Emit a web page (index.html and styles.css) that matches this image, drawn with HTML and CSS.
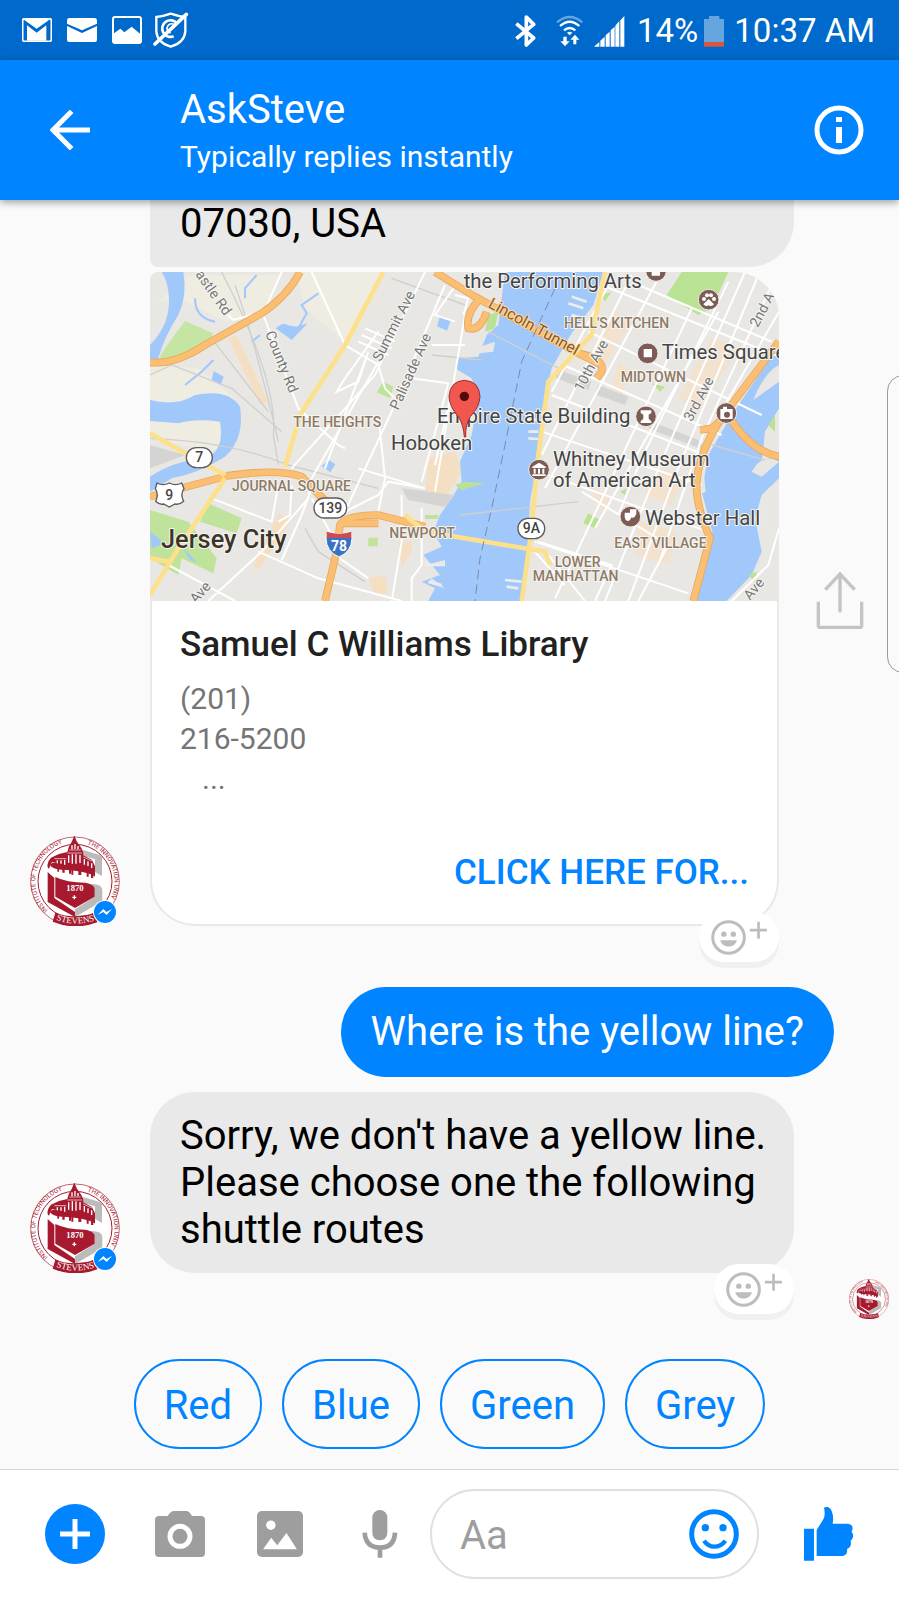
FILE: index.html
```html
<!DOCTYPE html>
<html lang="en">
<head>
<meta charset="utf-8">
<meta name="viewport" content="width=device-width, initial-scale=1">
<title>AskSteve</title>
<link rel="stylesheet" href="styles.css">
</head>
<body>
<svg class="defs" aria-hidden="true">
  <symbol id="seal" viewBox="90 50 270 270">
    <circle cx="225" cy="186" r="133" fill="#fff" stroke="#a6192e" stroke-width="2"/>
    <circle cx="225" cy="186" r="111" fill="none" stroke="#a6192e" stroke-width="3"/>
    <path id="arc-left" d="M144 273A119 119 0 0 1 206 68" fill="none"/>
    <path id="arc-right" d="M262 75A118 118 0 0 1 334 233" fill="none"/>
    <text class="seal-ring"><textPath href="#arc-left">INSTITUTE OF TECHNOLOGY</textPath></text>
    <text class="seal-ring"><textPath href="#arc-right">THE INNOVATION UNIVER</textPath></text>
    <path d="M250 92L306 109V170L285 158V120L250 110Z" fill="#bbb"/>
    <path d="M143 158L163 176V236L225 278V293L143 248Z" fill="#a6192e"/>
    <path d="M225 270L284 232V210L270 194Q307 193 307 212V246L225 293Z" fill="#bbb"/>
    <path d="M166 173Q200 190 255 190Q279 193 284 207V232L225 266L166 232Z" fill="#a6192e"/>
    <path d="M223 48L230 66L244 86L250 98V108L276 122L285 141V178L262 174L225 164L190 158Q160 160 144 146Q138 130 153 115L177 104L202 98L206 84L216 66Z" fill="#a6192e"/>
    <path d="M180 128Q154 126 151 138Q157 150 184 151Q260 154 286 172Q307 183 307 203Q290 184 246 180Q175 178 144 154L156 128Z" fill="#fff"/>
    <path d="M172 142h5v15h-5zM187 140h7v20h-7zM207 146h6v17h-6zM214 150h6v16h-6zM235 150h9v17h-9zM260 154h6v18h-6zM273 160h7v16h-7z" fill="#a6192e"/>
    <path d="M163 118h36M202 101h44M208 92h34M250 113l26 12" stroke="#fff" stroke-width="2"/>
    <path d="M172 123v9M183 123v10M194 121v15M206 108v22M217 105v28M228 105v28M240 107v24M253 119v17M264 126v14M275 132v14M216 78v12M225 74v15M234 80v10" stroke="#fff" stroke-width="4"/>
    <path d="M217 234h12M223 228v12" stroke="#fff" stroke-width="4"/>
    <text class="seal-year" x="225" y="214">1870</text>
    <path d="M166 280Q220 301 286 281L292 309Q225 334 158 307Z" fill="#a6192e"/>
    <path id="arc-bottom" d="M168 301Q225 324 290 302" fill="none"/>
    <text class="seal-name"><textPath href="#arc-bottom">STEVENS</textPath></text>
  </symbol>
  <symbol id="messenger" viewBox="0 0 72 72">
    <circle cx="36" cy="36" r="36" fill="#fff"/><circle cx="36" cy="36" r="33" fill="#0084ff"/>
    <path d="M14 45L31 27L40 36L57 27L41 45L31 36Z" fill="#fff"/>
  </symbol>
  <symbol id="react" viewBox="0 0 166 104">
    <g fill="none" stroke="#bdbdbd" stroke-width="9"><circle cx="52" cy="52" r="47"/><path d="M115 30h51M141 5v51" stroke-width="8"/></g>
    <g fill="#bdbdbd"><circle cx="38" cy="42" r="8"/><circle cx="66" cy="42" r="8"/><path d="M27 60H77Q71 79 52 79Q33 79 27 60Z"/></g>
  </symbol>
</svg>

<div class="app">
  <div class="status">
    <div class="status-left">
      <svg width="30" height="24" viewBox="66 54 90 72"><rect x="68" y="56" width="86" height="68" rx="6" fill="none" stroke="#fff" stroke-width="5"/><path d="M81 122V76L110 98L139 76V122ZM76 62L110 86L144 62L150 57H70Z" fill="#fff"/></svg>
      <svg width="30" height="24" viewBox="0 0 90 72"><path d="M6 0H84Q90 0 90 8V17L45 37L0 17V8Q0 0 6 0ZM0 24L45 45L90 24V65Q90 72 84 72H6Q0 72 0 65Z" fill="#fff"/></svg>
      <svg width="30" height="28" viewBox="0 0 90 84"><rect x="3" y="3" width="84" height="78" rx="6" fill="none" stroke="#fff" stroke-width="6"/><path d="M6 52L25 38L37 49L59 32L84 53V80H6Z" fill="#fff"/></svg>
      <svg class="shield" width="36" height="36" viewBox="462 36 108 108"><g fill="none" stroke="#fff"><path d="M472 51Q493 49 515 41Q538 49 559 51V94Q557 127 515 140Q474 127 472 94Z" stroke-width="7"/><path d="M534 70A25 25 0 1 0 524 109" stroke-width="8"/><path d="M530 78A14 14 0 1 0 515 99" stroke-width="5"/><path d="M468 132L562 43" stroke-width="11" stroke-linecap="round"/></g></svg>
    </div>
    <div class="status-right">
      <svg class="bluetooth" width="21" height="32" viewBox="198 41 63 96"><path d="M202 67L254 110L232 131V47L254 69L202 112" fill="none" stroke="#fff" stroke-width="11" stroke-linejoin="round"/></svg>
      <svg width="28" height="32" viewBox="321 42 84 96"><g fill="none" stroke="#fff" stroke-width="7"><path d="M324 64Q362 32 400 64" stroke="#66a6e0"/><path d="M333 75Q362 49 391 75M345 88Q362 74 379 88"/></g><path d="M354 95Q362 90 370 95L362 103ZM343 107h10v14h9l-14 15l-14-15h9zM373 130v-14h-9l14-15l13 15h-9v14z" fill="#fff"/></svg>
      <svg width="31" height="31" viewBox="432 43 93 93"><path d="M432 135L448 121V135ZM451 135V117L464 105V135ZM467 135V101L479 90V135ZM482 135V86L494 75V135ZM496 135V72L508 58V135ZM511 135V56L523 43V135Z" fill="#fff"/></svg>
      <span class="percent">14%</span>
      <svg class="battery" width="20" height="31" viewBox="0 0 60 93"><path d="M0 9H15V0H46V9H60V78H0Z" fill="#66a6e0"/><path d="M0 78H60V92H0Z" fill="#d9583c"/></svg>
      <span>10:37 AM</span>
    </div>
  </div>

  <header class="header">
    <button class="icon-btn back" aria-label="Back"><svg width="40" height="40" viewBox="150 330 120 120"><path d="M270 390H160M215 334L159 390L215 446" fill="none" stroke="#fff" stroke-width="15"/></svg></button>
    <div class="who"><h1>AskSteve</h1><p>Typically replies instantly</p></div>
    <button class="icon-btn" aria-label="Info"><svg width="50" height="50" viewBox="0 0 50 50"><circle cx="25" cy="25" r="22" fill="none" stroke="#fff" stroke-width="5"/><path d="M22 12h6v5h-6zM22 22h6v16h-6z" fill="#fff"/></svg></button>
  </header>

  <main class="chat">
    <div class="row"><div class="bubble bubble-cut">07030, USA</div></div>

    <div class="row row-card">
      <div class="avatar"><svg width="90" height="90"><use href="#seal"/></svg><svg class="badge" width="24" height="24"><use href="#messenger"/></svg></div>
      <article class="card">
        <svg class="map" viewBox="15 21 1887 987" role="img" aria-label="Map of Hoboken">
          <rect x="15" y="21" width="1887" height="987" fill="#e8e7e4"/>
          <path d="M15 300L160 310L270 400L280 500L200 560L15 520ZM450 21H720L600 230L480 130ZM40 110L130 30H410L350 150L240 170L100 100Z" fill="#efece1"/>
          <path d="M250 220L275 210L370 410L345 420ZM850 580L930 560L950 620L900 700L840 680ZM760 830L800 830L800 860L770 905ZM400 745L440 765L340 915L325 900ZM670 940L720 930L730 985L690 990Z" fill="#f5dfc2"/>
          <path d="M120 168L205 205L190 240L90 285L38 285L70 235Z" fill="#c5e6a3"/>
          <path d="M15 735L130 770L215 880L205 925L110 880L100 930L15 880ZM190 715L290 760L275 805L165 770ZM715 350L745 365L735 400L695 382ZM670 818h28v26h-28zM840 750h40v12h-40z" fill="#bfe39b"/>
          <g fill="#a0c8fb">
            <path d="M50 21H115Q128 90 100 150Q60 210 38 285H15V240Q75 180 72 100Q70 50 50 21Z"/>
            <path d="M15 405Q95 425 150 390Q250 370 285 425Q300 520 240 575Q160 625 80 640L15 680V635Q80 590 180 578Q240 560 225 470Q150 460 100 475L15 468Z"/>
            <path d="M885 152L918 164L906 197L876 184ZM392 190Q420 165 440 190L488 175L440 225ZM530 603L552 585L571 598L556 622ZM206 318L236 335L228 357L200 345ZM15 800L60 835L20 850ZM115 850L155 890L135 885Z"/>
            <path d="M1080 21H1375L1345 120L1280 205L1220 310L1190 440L1180 570L1155 710L1145 900L1130 1008H850L870 970L830 950L885 930L835 870L890 845L865 800L885 750L920 700L950 650L945 590L980 510L1000 400L980 340L930 310L940 280L1000 275L1025 210L1060 180Z"/>
            <path d="M1902 240L1760 450L1690 570L1670 680L1702 800L1645 1008H1745L1820 930L1850 860L1830 760L1850 690L1902 640V560L1850 590L1860 500L1902 430Z"/>
          </g>
          <g fill="#e8e7e4">
            <path d="M1825 405Q1860 320 1902 300V350ZM1820 620Q1855 560 1902 590L1850 635ZM840 900L900 885V900ZM860 940L900 970L850 955ZM1675 610L1682 680L1660 690ZM990 250L1050 230L1045 260L1005 265Z"/>
          </g>
          <path d="M300 100V70L335 30M150 100Q150 160 210 170M410 180L460 190L485 145L470 120L520 85M120 360L170 320L205 285M320 230L345 210" fill="none" stroke="#a0c8fb" stroke-width="6"/>
          <path d="M1610 21H1750L1700 130L1660 150L1565 90ZM1330 745L1365 765L1350 790L1315 775ZM1520 355L1560 365L1545 380ZM1425 680L1445 670L1440 690ZM1030 150L1060 140L1050 190L1020 200ZM1370 90L1400 80L1380 110ZM1540 850L1570 845L1560 870ZM1870 480L1890 450L1890 500ZM1810 930L1835 920L1830 950ZM1020 655L960 650L930 660L950 675Z" fill="#b9e294"/>
          <path d="M1400 140L1465 160L1380 300L1340 270ZM1700 220L1780 250L1660 440L1600 400ZM1540 610L1620 630L1580 720L1500 690ZM1480 770L1600 800L1570 900L1470 870ZM1420 290L1460 320L1430 390L1400 370ZM1330 660L1400 700L1370 740Z" fill="#f3e2cd"/>
          <path d="M1240 315L1340 350L1330 375L1232 340ZM1360 360L1450 395L1440 420L1350 388ZM1520 470L1660 525L1690 560L1510 490ZM770 670L930 690L900 725L790 705ZM15 540L120 570L15 610Z" fill="#d4d4d3"/>
          <g class="rail">
            <path d="M230 21Q400 350 385 510L400 600M270 60Q330 230 400 530M15 330L80 300L260 370L410 500M15 520Q260 530 430 600L700 670M480 790L520 860L660 950M740 40L960 120M1030 200L1260 320M860 270L1010 285M945 750L1300 710M1700 540L1860 585M370 440L200 220"/>
          </g>
          <g class="streets">
            <path d="M355 150L460 430L580 540L600 550M500 21L600 240L700 300L720 370L750 400M250 150L265 165L355 140M355 145L410 21M840 21L690 330L440 610M900 60L740 440L600 740M960 150L870 680M700 200L600 340L575 380L640 350L670 260L540 610M700 450L720 640L700 740M200 700L380 770L400 660M440 660L435 750L400 770M190 1008L350 860L490 700L500 640L700 290M70 900L270 1008M340 860L520 940L770 1008M410 885L470 750L500 670M500 700L560 810M570 870L670 940M640 610L840 670L730 650L700 690L600 740M830 730V900L800 940V1008M770 690V830L740 1008M860 240H960M800 340L910 355L830 650M925 70L870 150L930 170M870 600L920 380M930 90L970 100L955 150"/>
            <path d="M1370 60L1902 275M1330 200L1850 450M1255 300L1730 510M1220 390L1680 570M1190 500L1670 660M1180 620L1690 800M1170 830L1630 985M1310 680L1570 840L1480 1008M1390 60L1220 380M1460 30L1190 570M1540 40L1200 670M1640 130L1230 1000M1720 140L1350 790M1750 50L1490 580L1420 750M1800 21L1540 610L1380 1008M1840 30L1600 610L1450 1008M1880 60L1670 520L1540 900M1902 140L1740 420M1480 60L1880 230M1180 830L1400 900L1350 1008M1210 870L1320 1008M1160 850L1260 960"/>
            <path d="M1902 790L1870 900L1760 1008M660 190L750 230M650 210L740 250M640 230L730 270"/>
          </g>
          <g class="road road-edge"><path d="M15 292Q90 300 180 240L350 145Q430 90 465 21M15 695L250 632Q400 610 470 635Q510 680 550 715M870 21L990 95L1300 265L1370 300M540 1008L575 860L585 780Q600 750 700 750L840 785M590 775L700 775M1005 100Q960 150 970 190Q1005 200 1025 140M1300 265Q1380 280 1370 320L1355 340M1902 230L1740 445Q1650 570 1655 680Q1660 740 1695 820L1645 1008M1745 450L1700 490L1665 495M1755 460Q1820 560 1902 575"/></g>
          <g class="road"><path d="M15 292Q90 300 180 240L350 145Q430 90 465 21M15 695L250 632Q400 610 470 635Q510 680 550 715M870 21L990 95L1300 265L1370 300M540 1008L575 860L585 780Q600 750 700 750L840 785M590 775L700 775M1005 100Q960 150 970 190Q1005 200 1025 140M1300 265Q1380 280 1370 320L1355 340M1902 230L1740 445Q1650 570 1655 680Q1660 740 1695 820L1645 1008M1745 450L1700 490L1665 495M1755 460Q1820 560 1902 575"/></g>
          <path class="yellow" d="M715 21L600 240L465 450L420 605M15 505L130 570L240 630M240 640L100 850L15 990M15 880L70 890M1380 21L1340 210L1210 350L1180 570L1155 830L1130 1008M780 750L840 800L1200 860L1215 900"/>
          <path d="M1230 70L1130 290L1080 540L1040 730L1005 880L990 1008" fill="none" stroke="#7d8ba3" stroke-width="3" stroke-dasharray="28 16"/>
          <path d="M1280 95L1325 110M1270 115L1315 130M1280 150L1315 160M1140 460L1180 465M1150 500L1180 500M1150 520L1180 522M1150 615L1170 615M1080 945L1130 950M1085 965L1120 970M840 900H900M850 950L890 960" stroke="#ececea" stroke-width="8"/>

          <g class="street-name">
            <text transform="translate(150 28) rotate(55)">astle Rd</text>
            <text transform="translate(360 205) rotate(68)">County Rd</text>
            <text transform="translate(707 292) rotate(-63)">Summit Ave</text>
            <text transform="translate(760 437) rotate(-66)">Palisade Ave</text>
            <text transform="translate(153 1018) rotate(-48)">Ave</text>
            <text transform="translate(1312 382) rotate(-62)">10th Ave</text>
            <text transform="translate(1640 472) rotate(-62)">3rd Ave</text>
            <text transform="translate(1838 190) rotate(-62)">2nd A</text>
            <text transform="translate(1815 1008) rotate(-50)">Ave</text>
            <text class="tunnel" transform="translate(1027 125) rotate(29)">Lincoln Tunnel</text>
          </g>
          <g class="area">
            <text x="445" y="487">THE HEIGHTS</text><text x="261" y="677">JOURNAL SQUARE</text><text x="733" y="818">NEWPORT</text>
            <text x="1257" y="190">HELL'S KITCHEN</text><text x="1427" y="350">MIDTOWN</text><text x="1408" y="850">EAST VILLAGE</text>
            <text x="1229" y="907">LOWER</text><text x="1163" y="949">MANHATTAN</text>
          </g>
          <g class="place">
            <text x="956" y="69">the Performing Arts</text><text x="1550" y="283">Times Square</text>
            <text x="876" y="475">Empire State Building</text><text x="738" y="555">Hoboken</text>
            <text x="1224" y="604">Whitney Museum</text><text x="1224" y="665">of American Art</text><text x="1500" y="779">Webster Hall</text>
          </g>
          <text class="city" x="48" y="850">Jersey City</text>
          <g fill="#7c5c55" stroke="#f1ece8" stroke-width="3"><circle cx="1508" cy="265" r="31"/><circle cx="1503" cy="454" r="31"/><circle cx="1182" cy="614" r="31"/><circle cx="1456" cy="755" r="31"/><circle cx="1744" cy="444" r="31"/><circle cx="1691" cy="104" r="31"/><circle cx="1533" cy="18" r="31"/></g>
          <g fill="#fff"><path d="M1496 252h25v25h-25zM1487 436h32v8l-8 5v12l8 8v5h-32v-5l8-8v-12l-8-5zM1162 605l20-12l20 12v4h-40zM1166 611h6v15h-6zM1179 611h6v15h-6zM1192 611h6v15h-6zM1162 628h40v5h-40zM1726 432h8v-7h12v7h17v30h-37zM1439 743h20v13q-3 12-11 12q-8-2-9-11zM1455 733h19v14q-4 10-10 11h-5v-15h-4zM1520 20h25v12h-25z"/><circle cx="1677" cy="102" r="6"/><circle cx="1686" cy="91" r="6"/><circle cx="1698" cy="91" r="6"/><circle cx="1707" cy="102" r="6"/><path d="M1691 102L1707 118Q1700 126 1691 121Q1682 126 1675 118Z"/></g>
          <circle cx="1746" cy="449" r="9" fill="#7c5c55"/>
          <g fill="#fff" stroke="#5c5c5c" stroke-width="4"><rect x="124" y="548" width="78" height="60" rx="30"/><rect x="507" y="699" width="98" height="60" rx="30"/><rect x="1119" y="760" width="80" height="61" rx="30"/><path d="M36 654Q54 664 73 654Q92 664 110 654L117 671Q105 688 116 709Q104 720 90 717L73 726L56 717Q43 720 32 709Q42 688 31 671Z"/></g>
          <g class="shield-no"><text x="163" y="591">7</text><text x="556" y="744">139</text><text x="73" y="706">9</text><text x="1159" y="805">9A</text></g>
          <path d="M543 820Q550 805 545 800Q583 812 619 800Q615 810 621 820Q620 860 582 876Q544 860 543 820Z" fill="#3b73c4" stroke="#fff" stroke-width="3"/><path d="M545 800Q583 812 619 800L619 818H545Z" fill="#d34a4a"/>
          <text class="interstate" x="582" y="857">78</text>
          <path d="M958 516Q956 480 940 455Q913 425 912 394Q916 348 958 346Q1002 348 1005 394Q1004 425 976 455Q960 480 962 516Z" fill="#f2574f" stroke="#9c2f2c" stroke-width="3"/><circle cx="958" cy="394" r="14" fill="#4d0d0b"/>
        </svg>
        <div class="card-body">
          <h2>Samuel C Williams Library</h2>
          <p>(201)<br>216-5200</p>
          <p class="more">...</p>
          <a class="cta" href="#details">CLICK HERE FOR...</a>
        </div>
        <button class="react" aria-label="Add reaction"><svg width="56" height="35"><use href="#react"/></svg></button>
      </article>
      <button class="icon-btn share" aria-label="Share"><svg width="48" height="60" viewBox="468 92 144 180"><path d="M475 184V256Q475 261 481 261H599Q605 261 605 256V184M540 216V100M496 148L540 101L584 148" fill="none" stroke="#c4c4c4" stroke-width="10"/></svg></button>
    </div>

    <div class="bubble bubble-me">Where is the yellow line?</div>

    <div class="row">
      <div class="avatar"><svg width="90" height="90"><use href="#seal"/></svg><svg class="badge" width="24" height="24"><use href="#messenger"/></svg></div>
      <div class="bubble">Sorry, we don't have a yellow line. Please choose one the following shuttle routes
        <button class="react react-low" aria-label="Add reaction"><svg width="56" height="35"><use href="#react"/></svg></button>
      </div>
    </div>
    <div class="seen"><svg width="40" height="40"><use href="#seal"/></svg></div>

    <div class="replies"><button>Red</button><button>Blue</button><button>Green</button><button>Grey</button></div>
    <div class="edge-handle"></div>
  </main>

  <footer class="composer">
    <button class="icon-btn" aria-label="More"><svg width="60" height="60" viewBox="0 0 60 60"><circle cx="30" cy="30" r="30" fill="#0084ff"/><path d="M15 30h30M30 15v30" stroke="#fff" stroke-width="5"/></svg></button>
    <button class="icon-btn camera" aria-label="Camera"><svg width="50" height="46" viewBox="465 210 150 138"><path d="M477 225H503Q512 210 522 210H559Q568 210 576 225H603Q615 225 615 237V336Q615 348 603 348H477Q465 348 465 336V237Q465 225 477 225Z" fill="#9e9e9e"/><circle cx="540" cy="286" r="30" fill="#9e9e9e" stroke="#fff" stroke-width="15"/></svg></button>
    <button class="icon-btn photo" aria-label="Photo"><svg width="46" height="46" viewBox="771 214 136 136"><rect x="771" y="214" width="136" height="136" rx="14" fill="#9e9e9e"/><circle cx="812" cy="256" r="14" fill="#fff"/><path d="M789 327L813 293L831 315L858 279L889 327Z" fill="#fff"/></svg></button>
    <button class="icon-btn mic" aria-label="Voice"><svg width="36" height="48" viewBox="1085 214 108 144"><rect x="1116" y="214" width="45" height="91" rx="22" fill="#9e9e9e"/><path d="M1093 282Q1096 327 1139 327Q1182 327 1184 282M1139 327V357" fill="none" stroke="#9e9e9e" stroke-width="14"/></svg></button>
    <div class="field">
      <input type="text" placeholder="Aa" aria-label="Message">
      <button class="icon-btn" aria-label="Emoji"><svg width="50" height="50" viewBox="717 207 150 150"><circle cx="792" cy="282" r="67" fill="none" stroke="#0084ff" stroke-width="15"/><circle cx="766" cy="263" r="11" fill="#0084ff"/><circle cx="819" cy="263" r="11" fill="#0084ff"/><path d="M762 302Q775 320 793 320Q813 320 826 302" fill="none" stroke="#0084ff" stroke-width="13"/></svg></button>
    </div>
    <button class="icon-btn like" aria-label="Like"><svg width="50" height="54" viewBox="1062 195 150 162"><path d="M1062 260h30v96h-30zM1100 264L1120 232Q1127 220 1122 197Q1137 190 1145 207Q1152 224 1148 245H1194Q1207 247 1208 259Q1207 265 1205 269Q1211 277 1209 286Q1207 293 1202 296Q1204 308 1201 313Q1197 319 1191 321Q1194 338 1178 342H1100Z" fill="#0084ff"/></svg></button>
  </footer>
</div>
</body>
</html>
```
FILE: styles.css
```css
* { box-sizing: border-box; }
body { margin: 0; background: #fafafa; color: #000; font-family: Roboto, "Liberation Sans", sans-serif; }
h1, h2, p { margin: 0; font-weight: 400; }
button { font: inherit; border: 0; padding: 0; background: none; color: inherit; cursor: pointer; }
svg { display: block; flex: none; }
.defs { position: absolute; width: 0; height: 0; }
.app { display: flex; flex-direction: column; min-height: 100vh; }
.icon-btn { display: flex; flex: none; }

.status { display: flex; justify-content: space-between; align-items: center; height: 60px; padding: 0 24px 0 22px; background: #006acc; color: #fff; font-size: 33px; line-height: 40px; }
.status-left, .status-right { display: flex; align-items: center; }
.status-left { gap: 15px; }
.status-right { padding-top: 2px; }
.shield { margin-left: -4px; }
.status-right { gap: 10px; }
.bluetooth { margin-right: 10px; }
.percent { margin-left: 2px; }
.battery { margin-left: -4px; }

.header { position: relative; z-index: 1; display: flex; align-items: center; height: 140px; padding: 0 35px 0 50px; background: #0084ff; color: #fff; box-shadow: 0 2px 8px rgba(0, 0, 0, .4); }
.who { flex: 1; margin-left: 90px; padding-top: 4px; }
.who h1 { font-size: 40px; line-height: 50px; }
.who p { font-size: 30px; line-height: 44px; }

.chat { position: relative; display: flex; flex: 1; flex-direction: column; overflow: hidden; padding-bottom: 20px; }
.row { display: grid; grid-template-columns: minmax(0, 120px) minmax(0, 644px); column-gap: 30px; }
.row > .bubble { grid-column: 2; }
.row-card { grid-template-columns: minmax(0, 120px) minmax(0, 629px) 48px; margin-top: 5px; }
.avatar { position: relative; align-self: end; justify-self: end; width: 90px; }
.badge { position: absolute; right: 3px; bottom: 2px; }
.bubble { position: relative; padding: 20px 24px 20px 30px; border-radius: 45px; background: #e9e9e9; font-size: 40px; line-height: 47px; }
.bubble-cut { padding-top: 0; border-radius: 0 0 45px 8px; }
.bubble-me { align-self: flex-end; min-height: 90px; margin: 61px 65px 15px; padding: 20px 30px; background: #0084ff; color: #fff; line-height: 50px; }

.card { position: relative; }
.map { width: 100%; height: auto; border-radius: 8px 45px 0 0; }
.card-body { display: flex; flex-direction: column; padding: 20px 28px 30px; border: 2px solid #e9e9e9; border-top: 0; border-radius: 0 0 45px 45px; background: #fff; }
.card h2 { font-size: 35px; font-weight: 500; line-height: 48px; color: #212121; }
.card p { margin-top: 10px; font-size: 30px; line-height: 40px; color: #757575; }
.card .more { margin: 0; padding-left: 22px; }
.cta { align-self: flex-end; margin-top: 53px; font-size: 35px; font-weight: 500; line-height: 42px; color: #0084ff; text-decoration: none; }
.share { align-self: center; justify-self: center; margin: 4px 0 0 14px; }
.react { position: absolute; right: 0; bottom: -36px; display: flex; align-items: center; justify-content: center; width: 80px; height: 50px; border-radius: 25px; background: #fff; box-shadow: 0 6px 0 #f0f0f0; }
.react-low { bottom: -41px; }
.seen { align-self: flex-end; margin: 6px 10px 0 0; }

.replies { display: flex; justify-content: center; gap: 20px; margin-top: auto; padding-top: 20px; }
.replies button { height: 90px; padding: 2px 28px 0; border: 2px solid #0084ff; border-radius: 45px; color: #0084ff; font-size: 40px; }
.edge-handle { position: absolute; top: 175px; right: -20px; width: 32px; height: 298px; border: 1px solid #999; border-radius: 16px; background: #fafafa; }

.composer { display: flex; align-items: center; height: 130px; padding: 0 45px 2px; border-top: 1px solid #d8d8d8; background: #fff; }
.camera { margin-left: 50px; }
.photo { margin-left: 52px; }
.mic { margin-left: 59px; }
.field { display: flex; flex: 1; align-items: center; min-width: 0; height: 90px; margin-left: 32px; padding: 0 18px 0 28px; border: 2px solid #e0e0e0; border-radius: 45px; }
.field input { flex: 1; width: 0; min-width: 0; padding: 4px 0 0; border: 0; outline: 0; background: none; font: inherit; font-size: 40px; color: #212121; }
.field input::placeholder { color: #9e9e9e; opacity: 1; }
.like { margin-left: 45px; }

.rail path { fill: none; stroke: #cfcfce; stroke-width: 4px; }
.streets path { fill: none; stroke: #fff; stroke-width: 6px; }
.road path { fill: none; stroke: #fbbf73; stroke-width: 18px; }
.road-edge path { stroke: #e9a75c; stroke-width: 23px; }
.yellow { fill: none; stroke: #fce08a; stroke-width: 14px; }
.map text { font-family: Roboto, sans-serif; paint-order: stroke; stroke: #f6f5f2; stroke-width: 6px; stroke-linejoin: round; }
.map .street-name text { font-size: 43px; fill: #777; }
.map .street-name .tunnel { font-size: 47px; fill: #8a5a1e; stroke: #fbd9a8; }
.map .area text { font-size: 42px; font-weight: 500; fill: #8d7a66; }
.map .place text { font-size: 61px; fill: #444; }
.map .city { font-size: 76px; font-weight: 500; fill: #3d3428; }
.map .shield-no text { font-size: 42px; font-weight: 500; fill: #444; text-anchor: middle; stroke: none; }
.map .interstate { font-size: 42px; font-weight: 700; fill: #fff; text-anchor: middle; stroke: none; }
.seal-ring { font-family: Roboto, sans-serif; font-size: 19px; fill: #a6192e; }
.seal-year { font-family: "Liberation Serif", serif; font-size: 26px; font-weight: 700; fill: #fff; text-anchor: middle; }
.seal-name { font-family: "Liberation Serif", serif; font-size: 27px; fill: #fff; }
```
